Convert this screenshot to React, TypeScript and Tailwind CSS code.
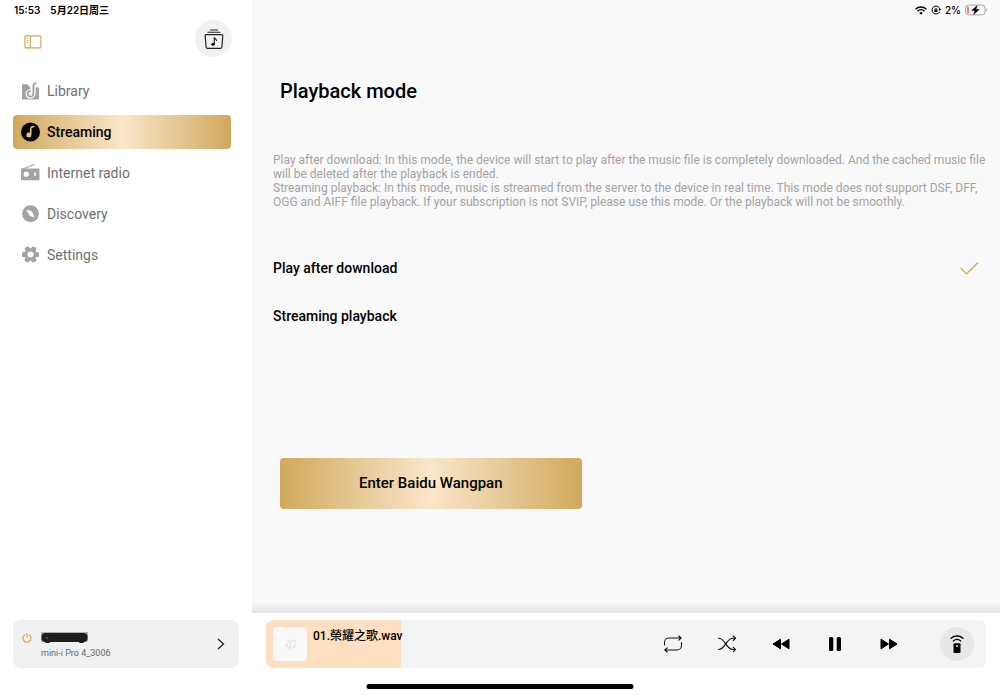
import React, { useState } from "react";

const goldGradient =
  "bg-[linear-gradient(90deg,#d0a95d_0%,#fae6ca_50%,#d0a95d_100%)]";

const LibraryIcon = () => (
  <svg viewBox="0 0 20 20" className="size-5" aria-hidden="true">
    <path d="M2 3.200h5.200l3.300 3.500v6h5V6.500H19v12H2z" fill="#a3a3a3" />
    <path d="M13.400 6v6.800a2.900 2.900 0 1 1-2.700-2.900" fill="none" stroke="#fff" strokeWidth="4" />
    <path d="M16.300 2.200c-2.100.2-2.900 1-2.900 2.700v7.900a2.900 2.900 0 1 1-2.500-2.900" fill="none" stroke="#a3a3a3" strokeWidth="1.900" />
    <circle cx="10.500" cy="12.800" r="1.100" fill="#fff" />
  </svg>
);

const StreamingIcon = () => (
  <svg viewBox="0 0 20 20" className="size-5" aria-hidden="true">
    <circle cx="10.500" cy="10" r="9.500" fill="#000" />
    <path d="M14.300 4.500c-2.600 0-3.600.8-3.600 2.600v4.500" fill="none" stroke="#e2c083" strokeWidth="1.300" />
    <path d="M9.900 7h1.500v6a2.500 2.500 0 1 1-1.500-2.300z" fill="#e2c083" />
  </svg>
);

const RadioIcon = () => (
  <svg viewBox="0 0 20 20" className="size-5" aria-hidden="true">
    <path d="M2.500 6L14.500 1.500" stroke="#a3a3a3" strokeWidth="1.300" />
    <rect x="1" y="5.500" width="18.500" height="11.700" rx=".8" fill="#a3a3a3" />
    <circle cx="6.200" cy="11.200" r="2.600" fill="#fff" />
    <rect x="14.200" y="9.400" width="1.700" height="3.600" rx=".8" fill="#fff" />
  </svg>
);

const DiscoveryIcon = () => (
  <svg viewBox="0 0 20 20" className="size-5" aria-hidden="true">
    <circle cx="10.500" cy="9.700" r="8.400" fill="#a3a3a3" />
    <path d="M6.500 5.900c3.200-.2 5.500.8 6.300 3.200l1.700 4.400c-3-.4-5.200-1.600-6-3.700z" fill="#fff" />
  </svg>
);

const SettingsIcon = () => (
  <svg viewBox="0 0 20 20" className="size-5" aria-hidden="true">
    <circle cx="10.500" cy="9.500" r="6.300" fill="#a3a3a3" />
    <g fill="#a3a3a3">
      <rect x="2" y="7.100" width="17" height="4.800" rx="1.500" />
      <rect x="2" y="7.100" width="17" height="4.800" rx="1.500" transform="rotate(60 10.500 9.500)" />
      <rect x="2" y="7.100" width="17" height="4.800" rx="1.500" transform="rotate(120 10.500 9.500)" />
    </g>
    <circle cx="10.500" cy="9.500" r="3" fill="#fff" />
  </svg>
);

const SidebarIcon = () => (
  <svg viewBox="0 0 18 14" className="h-3.5 w-[18px]" fill="none" stroke="#d3a654" aria-hidden="true">
    <rect x=".9" y=".9" width="16" height="12" rx="1" strokeWidth="1.100" />
    <path d="M6.300 1v12" strokeWidth="1.100" />
    <path d="M2.500 3.500h2M2.500 5.500h2M2.500 7.500h2" strokeWidth=".8" />
  </svg>
);

const QueueIcon = () => (
  <svg viewBox="0 0 20 20" className="size-5" fill="none" stroke="#222" strokeLinecap="round" aria-hidden="true">
    <path d="M6.500 1h7" strokeWidth="1.100" />
    <path d="M4 3.300h12" strokeWidth="1.100" />
    <path d="M2 5.700h16c.6 0 .8.400.8.900l-.9 11.500c0 .8-.5 1.200-1.200 1.200H3.300c-.7 0-1.200-.4-1.200-1.200L1.200 6.600c0-.5.200-.9.800-.9z" strokeWidth="1.200" />
    <path d="M10.300 15V8.300c.2 1.400 2.200 1.500 2.200 3.200" strokeWidth="1.100" />
    <ellipse cx="9" cy="15.200" rx="1.700" ry="1.500" fill="#111" stroke="none" />
  </svg>
);

const PowerIcon = () => (
  <svg viewBox="0 0 10 10" className="size-2.5" fill="none" stroke="#d3a654" strokeLinecap="round" aria-hidden="true">
    <path d="M2.800 1.900a4 4 0 1 0 4.400 0M5 .7v3.600" strokeWidth="1.200" />
  </svg>
);

const DeviceImage = () => (
  <svg viewBox="0 0 47 11" className="h-[11px] w-[47px]" aria-hidden="true">
    <rect width="47" height="9.500" fill="#a9b2ae" />
    <rect x="4" y="9" width="5" height="2" rx="1" fill="#222" />
    <rect x="38" y="9" width="5" height="2" rx="1" fill="#222" />
    <rect x=".5" y="1" width="46" height="9" rx="4" fill="#1c1d1c" />
    <circle cx="6" cy="6" r="1.200" fill="#5c4a25" />
    <circle cx="10" cy="6" r=".6" fill="#494949" />
  </svg>
);

const WifiIcon = () => (
  <svg viewBox="0 0 12 9" className="h-[9px] w-3" fill="none" stroke="#000" aria-hidden="true">
    <path d="M.6 3.200a7.700 7.700 0 0 1 10.800 0" strokeWidth="1.600" />
    <path d="M2.500 5.200a5 5 0 0 1 7 0" strokeWidth="1.500" />
    <path d="M6 8.700L4.200 6.900a2.600 2.600 0 0 1 3.600 0z" fill="#000" stroke="none" />
  </svg>
);

const RotationLockIcon = () => (
  <svg viewBox="0 0 10 10" className="size-2.5" fill="none" stroke="#000" aria-hidden="true">
    <path d="M8.700 6.600A4 4 0 1 1 9 4.600" strokeWidth="1" />
    <path d="M7.500 4h2.500L8.800 6z" fill="#000" stroke="none" />
    <rect x="3.300" y="4.600" width="3.200" height="2.300" rx=".4" fill="#000" stroke="none" />
    <path d="M4 4.700v-.8a.9.9 0 0 1 1.800 0v.8" strokeWidth=".7" />
  </svg>
);

const BatteryIcon = () => (
  <svg viewBox="0 0 23 12" className="h-3 w-[23px]" aria-hidden="true">
    <rect x=".6" y="1.100" width="19.500" height="9.800" rx="3" fill="none" stroke="#a5a5a5" />
    <path d="M21.300 4.500v3c1.300-.5 1.300-2.500 0-3z" fill="#a5a5a5" />
    <rect x="2" y="2.600" width="2" height="6.800" rx=".9" fill="#ff7b72" />
    <path d="M12.300 1.500L6.500 6.500h3.400L8.700 10.500l5.600-5H11z" fill="#000" stroke="#000" strokeWidth=".4" />
  </svg>
);

const RepeatIcon = () => (
  <svg viewBox="0 0 20 18" className="h-[18px] w-5" fill="none" stroke="#111" strokeWidth="1.100" strokeLinecap="round" aria-hidden="true">
    <path d="M1.500 10V7.500a4.500 4.500 0 0 1 4.500-4.500h12M15.800 1l2.400 2-2.400 2.200" />
    <path d="M18.500 7.500v3a4.500 4.500 0 0 1-4.500 4.500H2M4.200 12.800L1.800 15l2.400 2" />
  </svg>
);

const ShuffleIcon = () => (
  <svg viewBox="0 0 20 18" className="h-[18px] w-5" fill="none" stroke="#111" strokeWidth="1.100" strokeLinecap="round" aria-hidden="true">
    <path d="M1.500 3.300c7 0 7.500 11.200 14.500 11.200h2.200M1.500 14.500c7 0 7.500-11.200 14.500-11.200h2.200" />
    <path d="M16.200 1l2.300 2.300-2.300 2.200M16.200 12.300l2.300 2.200-2.300 2.300" />
  </svg>
);

const RewindIcon = () => (
  <svg viewBox="0 0 18 12" className="h-3 w-[18px]" fill="#000" stroke="#000" strokeLinejoin="round" aria-hidden="true">
    <path d="M8.500 1.200v9.600L1 6zM17 1.200v9.600L9.500 6z" />
  </svg>
);

const PauseIcon = () => (
  <svg viewBox="0 0 14 14" className="size-3.5" aria-hidden="true">
    <rect x="1" width="4.300" height="14" rx="1.500" />
    <rect x="8.700" width="4.300" height="14" rx="1.500" />
  </svg>
);

const ForwardIcon = () => (
  <svg viewBox="0 0 18 12" className="h-3 w-[18px]" fill="#000" stroke="#000" strokeLinejoin="round" aria-hidden="true">
    <path d="M1 1.200v9.600L8.500 6zM9.500 1.200v9.600L17 6z" />
  </svg>
);

const RemoteIcon = () => (
  <svg viewBox="0 0 14 18" className="h-[18px] w-3.5" fill="none" stroke="#000" strokeLinecap="round" aria-hidden="true">
    <path d="M1 3.300c3.500-3.100 8.500-3.100 12 0" strokeWidth="1.300" />
    <path d="M3.300 6c2.200-1.800 5.200-1.800 7.400 0" strokeWidth="1.200" />
    <rect x="3.500" y="8.300" width="7" height="9.700" rx="1" fill="#000" stroke="none" />
    <circle cx="7" cy="11" r=".9" fill="#ddd" stroke="none" />
  </svg>
);

const MusicIcon = () => (
  <svg viewBox="0 0 12 12" className="size-3" fill="none" stroke="#e2e2e2" aria-hidden="true">
    <path d="M3.500 8l1-6.500 1.500 2M6.500 10V3.500l4.500-1v6" />
    <circle cx="2.300" cy="8" r="1.200" />
    <circle cx="5.300" cy="10.300" r="1.200" />
    <circle cx="9.800" cy="8.800" r="1.200" />
  </svg>
);

const navItems = [
  { label: "Library", icon: <LibraryIcon /> },
  { label: "Streaming", icon: <StreamingIcon /> },
  { label: "Internet radio", icon: <RadioIcon /> },
  { label: "Discovery", icon: <DiscoveryIcon /> },
  { label: "Settings", icon: <SettingsIcon /> },
];

const modes = ["Play after download", "Streaming playback"];

const controls = [
  { label: "Repeat", icon: <RepeatIcon /> },
  { label: "Shuffle", icon: <ShuffleIcon /> },
  { label: "Previous", icon: <RewindIcon /> },
  { label: "Pause", icon: <PauseIcon /> },
  { label: "Next", icon: <ForwardIcon /> },
];

const Sidebar = () => {
  return (
    <aside className="flex w-[252px] shrink-0 flex-col bg-white px-[13px]">
      <div className="flex h-5 items-center gap-2.5 pl-px font-['Inter','Noto_Sans_CJK_SC',sans-serif] text-[10px] font-semibold">
        <span>15:53</span>
        <span>5月22日周三</span>
      </div>
      <div className="flex h-[38px] items-start justify-between pr-[7px] pl-[11px]">
        <button aria-label="Toggle sidebar" className="pt-[15px]">
          <SidebarIcon />
        </button>
        <button aria-label="Queue" className="flex size-[37px] items-center justify-center rounded-full bg-[#f1f1f1]">
          <QueueIcon />
        </button>
      </div>
      <nav className="mt-4 mr-2 flex flex-col gap-[7px]">
        {navItems.map((item) => (
          <a
            key={item.label}
            href="#"
            className={`flex h-[34px] items-center gap-[7px] rounded px-[7px] text-sm ${
              item.label === "Streaming"
                ? `${goldGradient} font-medium text-black`
                : "text-[#707070]"
            }`}
          >
            {item.icon}
            {item.label}
          </a>
        ))}
      </nav>
      <button className="mt-auto mb-[27px] flex h-12 items-center rounded-lg bg-[#f1f1f1] pr-3 pl-[9px] text-left">
        <span className="mr-[9px] mb-3">
          <PowerIcon />
        </span>
        <span className="flex flex-1 flex-col gap-1 pt-0.5">
          <DeviceImage />
          <span className="text-[9px] leading-3 text-[#666]">mini-i Pro 4_3006</span>
        </span>
        <svg viewBox="0 0 12 12" className="size-3" fill="none" stroke="#222" strokeWidth="1.300" aria-hidden="true">
          <path d="M3 1l5.500 5L3 11" />
        </svg>
      </button>
    </aside>
  );
};

const Player = () => {
  const progress = 18.7;

  return (
    <footer className="bg-white px-3.5 pt-[7px] pb-[27px]">
      <div className="relative flex h-12 items-center overflow-hidden rounded-lg bg-[#f4f4f4] pr-3 pl-[7px]">
        <div className="absolute inset-y-0 left-0 bg-[#ffdfc2]" style={{ width: `${progress}%` }} />
        <div className="relative flex size-[34px] items-center justify-center rounded bg-[#f9f9f9]">
          <MusicIcon />
        </div>
        <p className="relative ml-1.5 flex-1 self-start pt-2 font-['Roboto','Noto_Sans_CJK_TC',sans-serif] text-xs font-medium">
          01.榮耀之歌.wav
        </p>
        <div className="mr-6 flex">
          {controls.map((item) => (
            <button key={item.label} aria-label={item.label} className="flex h-12 w-[54px] items-center justify-center">
              {item.icon}
            </button>
          ))}
        </div>
        <button aria-label="Remote" className="flex size-[34px] items-center justify-center rounded-full bg-[#e7e7e7]">
          <RemoteIcon />
        </button>
      </div>
    </footer>
  );
};

const App = () => {
  const [mode, setMode] = useState(modes[0]);

  return (
    <div className="relative flex min-h-screen font-['Roboto',sans-serif] text-black">
      <Sidebar />
      <div className="flex min-w-0 flex-1 flex-col bg-[#f9f9f9]">
        <div className="flex h-5 items-center justify-end gap-1 pr-3 font-['Inter',sans-serif] text-[10px] font-medium">
          <WifiIcon />
          <RotationLockIcon />
          <span>2%</span>
          <BatteryIcon />
        </div>
        <main className="flex-1 pr-[9px] pl-[21px]">
          <h1 className="mt-14 ml-[7px] text-xl leading-[30px] font-medium">Playback mode</h1>
          <div className="mt-[47px] text-xs leading-[14px] text-[#a3a3a3]">
            <p>
              Play after download: In this mode, the device will start to play
              after the music file is completely downloaded. And the cached
              music file will be deleted after the playback is ended.
            </p>
            <p>
              Streaming playback: In this mode, music is streamed from the
              server to the device in real time. This mode does not support DSF,
              DFF, OGG and AIFF file playback. If your subscription is not SVIP,
              please use this mode. Or the playback will not be smoothly.
            </p>
          </div>
          <div className="mt-[35px] pr-3">
            {modes.map((item) => (
              <label key={item} className="flex h-12 items-center justify-between text-sm font-medium">
                <span>{item}</span>
                <input
                  type="radio"
                  name="mode"
                  className="peer sr-only"
                  checked={mode === item}
                  onChange={() => setMode(item)}
                />
                <svg viewBox="0 0 20 14" className="hidden h-3.5 w-5 peer-checked:block" fill="none" stroke="#d3a654" strokeWidth="1.200" aria-hidden="true">
                  <path d="M1.500 7l6 6L19 1.500" />
                </svg>
              </label>
            ))}
          </div>
          <button className={`mt-[118px] ml-[7px] h-[51px] w-[42%] rounded text-[15px] font-medium ${goldGradient}`}>
            Enter Baidu Wangpan
          </button>
        </main>
        <div className="h-3 bg-linear-to-b from-[#f9f9f9] to-[#e3e3e3]" />
        <Player />
      </div>
      <div className="absolute bottom-[6px] left-1/2 h-[5px] w-[267px] -translate-x-1/2 rounded-full bg-black" />
    </div>
  );
};

export default App;
